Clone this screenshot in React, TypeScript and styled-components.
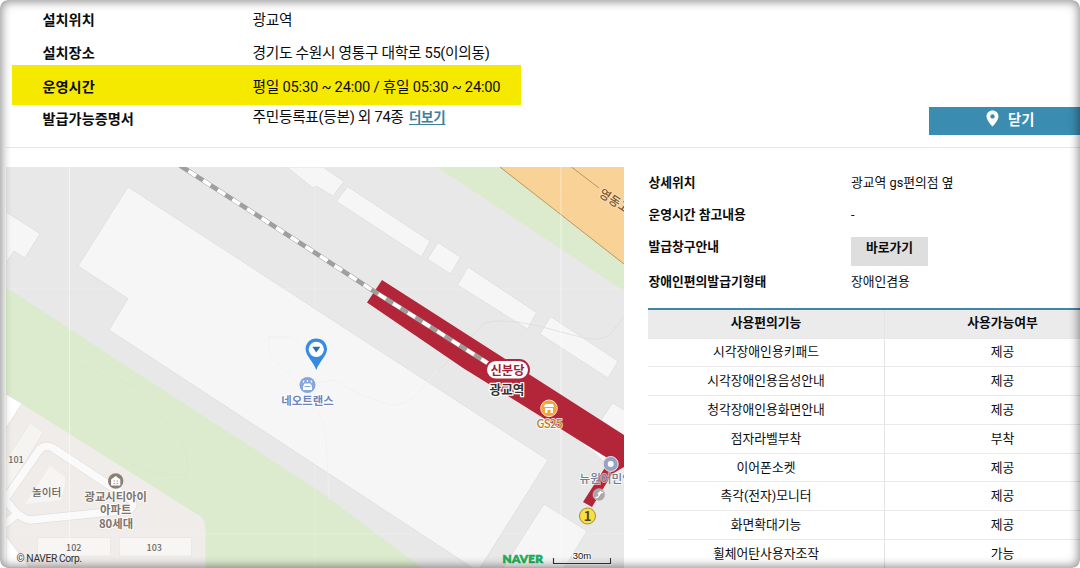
import React from 'react';
import styled, { createGlobalStyle, css } from 'styled-components';

const GlobalStyle = createGlobalStyle`
  *, *::before, *::after { box-sizing: border-box; }
  body {
    margin: 0;
    background: #fff;
    color: #0c0c0c;
    font-family: Roboto, "Noto Sans CJK KR", sans-serif;
  }
`;

const Page = styled.div`
  position: relative;
  width: 1080px;
  height: 568px;
  overflow: hidden;
  border-radius: 8px;
  background: #fff;
`;

const FrameShade = styled.div`
  position: absolute;
  inset: 0;
  border-radius: 8px;
  pointer-events: none;
  box-shadow: inset 0 0 10px 2px rgba(0, 0, 0, 0.42);
`;

const Summary = styled.section`
  display: flex;
  justify-content: space-between;
  height: 148px;
  margin-left: 6px;
  border-bottom: 1px solid #e6e6e6;
`;

const SummaryList = styled.dl`
  display: flex;
  flex-direction: column;
  width: 515px;
  margin: 0;
  padding: 3px 0 0 6px;
`;

const SummaryRow = styled.div<{ $height: number; $top?: number; $highlight?: boolean }>`
  display: grid;
  grid-template-columns: 210px 1fr;
  align-items: center;
  height: ${(p) => p.$height}px;
  padding: ${(p) => p.$top ?? 0}px 0 0 30.5px;
  background: ${(p) => (p.$highlight ? '#f6e900' : 'transparent')};
`;

const SummaryLabel = styled.dt`
  font-size: 14.2px;
  font-weight: 700;
  line-height: 22px;
  white-space: nowrap;
`;

const SummaryValue = styled.dd<{ $raise?: number; $tracking?: number }>`
  margin: 0;
  padding-bottom: ${(p) => p.$raise ?? 0}px;
  font-size: 14.7px;
  letter-spacing: ${(p) => p.$tracking ?? -0.3}px;
  line-height: 22px;
  white-space: nowrap;
`;

const MoreLink = styled.a`
  margin-left: 2px;
  color: #3f7f9c;
  font-size: 13.5px;
  font-weight: 700;
  text-decoration: underline;
  text-underline-offset: 2px;
`;

const CloseButton = styled.button`
  display: flex;
  align-items: center;
  align-self: flex-end;
  gap: 9px;
  width: 151px;
  height: 28.5px;
  margin-bottom: 12px;
  padding: 0 0 5px 57px;
  border: 0;
  background: #3a8cb0;
  color: #fff;
  font: 700 14.3px Roboto, "Noto Sans CJK KR", sans-serif;
`;

const Body = styled.main`
  display: flex;
  padding: 19px 0 0 6px;
`;

const MapCanvas = styled.svg`
  display: block;
  flex: none;
  width: 618px;
  height: 401px;
  font-family: "Noto Sans CJK KR", sans-serif;
`;

const Details = styled.section`
  flex: none;
  width: 472px;
  margin-left: 24px;
`;

const DetailList = styled.dl`
  margin: 0;
`;

const DetailRow = styled.div<{ $height: number }>`
  display: grid;
  grid-template-columns: 202.5px 1fr;
  align-items: center;
  height: ${(p) => p.$height}px;
  padding-left: 0.5px;
  font-size: 12.8px;
  line-height: 20px;
`;

const DetailLabel = styled.dt<{ $raise?: number }>`
  padding-bottom: ${(p) => p.$raise ?? 0}px;
  font-weight: 700;
`;

const DetailValue = styled.dd`
  margin: 0;
`;

const GoButton = styled.button`
  display: block;
  width: 77px;
  height: 29px;
  margin-top: 6px;
  padding: 0 0 8px;
  border: 0;
  background: #dedede;
  color: #0c0c0c;
  font: 700 12.8px/20px Roboto, "Noto Sans CJK KR", sans-serif;
`;

const FeatureTable = styled.table`
  width: 100%;
  margin-top: 9px;
  border-top: 2px solid #3f86a3;
  border-spacing: 0;
  table-layout: fixed;
`;

const cell = css`
  padding: 0 0 2px;
  border-bottom: 1px solid #e9e9e9;
  font-size: 12.8px;
  line-height: 20px;
  text-align: center;

  & + & { border-left: 1px solid #e4e4e4; }
`;

const HeadCell = styled.th`
  ${cell}
  height: 28.5px;
  background: #ebebeb;
  font-weight: 700;
`;

const Cell = styled.td`
  ${cell}
  height: 28.8px;
  padding-bottom: 0;
`;

const features = [
  ['시각장애인용키패드', '제공'],
  ['시각장애인용음성안내', '제공'],
  ['청각장애인용화면안내', '제공'],
  ['점자라벨부착', '부착'],
  ['이어폰소켓', '제공'],
  ['촉각(전자)모니터', '제공'],
  ['화면확대기능', '제공'],
  ['휠체어탄사용자조작', '가능'],
];

const buildings = [
  '128,187 78,266 128,298.5 109,330 473,568 480,568 548,460 320,312',
  '6,212 40,233.5 25,258 14,251 6,263',
  '287,167 313,188 316,186 333,196 344,181.5 323,167',
  '347.5,186.5 430,241 421.5,257 336.5,201.5',
  '438,242.5 460.5,257 450.5,274 427.5,259',
  '468,267 536.5,312.5 527.5,329 457.5,285',
  '550.5,316.5 618,361 608,378 540,334',
  '612.5,403 626,411 626,440 601,420',
  '586,445 590,442 614,458 606,464',
  '544,504 587,531 564,568 503,568',
];

const PinIcon = () => (
  <svg width="13" height="17" viewBox="0 0 13 17">
    <path
      fill="#fff"
      fillRule="evenodd"
      d="M6.5 0.5C3 0.5 0.5 3.1 0.5 6.4C0.5 10.5 6.5 16.5 6.5 16.5S12.5 10.5 12.5 6.4C12.5 3.1 10 0.5 6.5 0.5ZM6.5 4.2A2.2 2.2 0 1 1 6.5 8.6A2.2 2.2 0 1 1 6.5 4.2Z"
    />
  </svg>
);

const StationMap = () => (
  <MapCanvas viewBox="6 167 618 401">
    <rect x="6" y="167" width="618" height="401" fill="#e8e8e8" />

    {/* parks and the motorway */}
    <path d="M6 287L117 360L320 491.5L422 568H6Z" fill="#dcebcd" />
    <path d="M437 167H624V291Z" fill="#dcebcd" />
    <path d="M500 167H624V264Z" fill="#f8d297" />
    <path d="M500 167L624 264M571.5 167L599 188" fill="none" stroke="#bd9560" strokeWidth="1" />
    <path d="M74 364L135 386L152 407L183 443Q190 461 186 475Q150 478 110 453" fill="none" stroke="#d7e6c9" strokeWidth="0.7" />

    {/* apartment block */}
    <path d="M6 394L200 516Q205 519 205.500 530V568H6Z" fill="#f0ecea" />
    <path d="M6 394L22 403.500L6 428Z" fill="#fff" stroke="#ddd9d6" strokeWidth="0.6" />
    <path d="M6 536L30 568H6Z" fill="#fff" stroke="#ddd9d6" strokeWidth="0.6" />
    <path d="M30 423L43.500 432L6 493V460Z" fill="#f6f4f1" stroke="#e7e2df" strokeWidth="0.6" />
    <path d="M50 466L65 477V484L61 500L25 504Z" fill="#f6f5f4" />
    <g fill="none" strokeLinejoin="round" strokeLinecap="round">
      <path d="M3 502L40 449Q46 444 53 448L130 499Q136 505 129 510L30 520Q20 519 8 503M15 516L3 525" stroke="#e3dfdd" strokeWidth="9" />
      <path d="M3 502L40 449Q46 444 53 448L130 499Q136 505 129 510L30 520Q20 519 8 503M15 516L3 525" stroke="#fafafa" strokeWidth="7.500" />
    </g>
    <rect x="37.500" y="537.500" width="73" height="18.500" fill="#f7f6f4" stroke="#e7e4e1" strokeWidth="0.7" />
    <rect x="119.500" y="537.500" width="72" height="18.500" fill="#f7f6f4" stroke="#e7e4e1" strokeWidth="0.7" />

    <g fill="#f6f6f6" stroke="#dedede" strokeWidth="0.8">
      {buildings.map((points) => (
        <polygon key={points} points={points} />
      ))}
    </g>
    <path d="M438 371Q470 339 484 323Q500 318 535 325L580 337Q605 343 612 332L624 316" fill="none" stroke="#dcdcdc" strokeWidth="0.8" />
    <path d="M268 337H292L308 352M268 337L270 356L300 385L335 380Q362 398 392 405Q404 405 412 399L438 370M318 412Q325 425 326 437L329 500" fill="none" stroke="#f0f0f0" strokeWidth="0.8" />

    {/* tile seams */}
    <g stroke="#fff">
      <path d="M69.500 167V568M561 167V568" strokeOpacity="0.5" />
      <path d="M315 167V568M6 289H624M6 534H624" strokeOpacity="0.2" />
    </g>

    {/* station platform and railway */}
    <path d="M382 280L624 435V467L612 474L592 507L583 502L606 466L609 459L463 368L367 302.500Z" fill="#b3263a" />
    <path d="M608 460L584 444.500" stroke="#fff" strokeWidth="1" />
    <path d="M180 165.500L310 249.500L372 290L489 364" fill="none" stroke="#a19e9b" strokeWidth="4.600" />
    <path d="M188.500 171L310 249.500L372 290L489 364" fill="none" stroke="#fff" strokeWidth="3.800" strokeDasharray="9 8.400" />

    <text x="598" y="195.500" transform="rotate(33 598 195.500)" fontSize="12.300" fontWeight="500" fill="#80562c" stroke="#fbe5c2" strokeWidth="1.500" paintOrder="stroke">영동고</text>

    {/* station name */}
    <rect x="486" y="360" width="43" height="19.500" rx="9.750" fill="#fff" stroke="#b3263a" strokeWidth="2" />
    <g textAnchor="middle" fontWeight="700" paintOrder="stroke" strokeLinejoin="round">
      <text x="507.500" y="374.500" fontSize="12.300" fill="#a32137">신분당</text>
      <text x="507" y="394" fontSize="12.600" fill="#333" stroke="#fff" strokeWidth="2.500">광교역</text>
    </g>

    {/* convenience store */}
    <circle cx="549" cy="408.300" r="8.300" fill="#f2a53b" stroke="#fbe3bd" strokeWidth="1" />
    <path d="M545 404H553L554 407H544ZM545 408H553V413H550.500V410H547.500V413H545Z" fill="#fff" />
    <text x="549.500" y="427.500" textAnchor="middle" fontSize="11.500" fontWeight="500" fill="#b6852c" stroke="#fff" strokeOpacity="0.8" strokeWidth="1.800" paintOrder="stroke" textLength="26">GS25</text>

    {/* business */}
    <circle cx="307.500" cy="385" r="8" fill="#88a6de" />
    <path d="M303 382.500L304.200 380.500M307.500 382V380M312 382.500L310.800 380.500" stroke="#fff" strokeWidth="1.200" />
    <path d="M304.500 383.500H310.500L312 386.500V390H303V386.500Z" fill="#fff" />
    <path d="M304.500 386.500H310.500" stroke="#88a6de" strokeWidth="1" />
    <text x="307.500" y="404.500" textAnchor="middle" fontSize="11.400" fontWeight="700" fill="#6f85bd" stroke="#fff" strokeWidth="2" paintOrder="stroke">네오트랜스</text>

    {/* kiosk location */}
    <path d="M316.300 338.500C310 338.500 305.600 343.200 305.600 349C305.600 356 313 361 316.300 370C319.600 361 327 356 327 349C327 343.200 322.600 338.500 316.300 338.500Z" fill="#378ce2" />
    <circle cx="316.300" cy="349.300" r="7.600" fill="#fff" />
    <path d="M312.300 346.800H320.300L316.300 352.500Z" fill="#2d6d9e" />

    {/* clinic, escalator and exit */}
    <circle cx="610.700" cy="464" r="7.500" fill="#97a3c3" stroke="#e4e7f0" strokeWidth="1" />
    <circle cx="610.700" cy="464" r="3" fill="#fff" />
    <text x="579.500" y="482.800" fontSize="11.600" fontWeight="500" fill="#747c92" stroke="#fff" strokeOpacity="0.6" strokeWidth="1.800" paintOrder="stroke">뉴원어민영</text>
    <circle cx="599" cy="494.700" r="6" fill="#a8a8a8" stroke="#d0d0d0" strokeWidth="0.6" />
    <path d="M595.500 497.500H597.500L601 492.500H603M598 493L599.500 495M601 491L599 493" fill="none" stroke="#fff" strokeWidth="1.300" />
    <circle cx="587.500" cy="516" r="8" fill="#f8df43" stroke="#a38d35" strokeWidth="1" />
    <text x="587.500" y="521" textAnchor="middle" fontSize="13" fontWeight="700" fill="#504824">1</text>

    {/* apartment labels */}
    <circle cx="115.700" cy="481" r="7.700" fill="#898078" />
    <path d="M115.700 476L120.300 479.500V485.500H111.100V479.500Z" fill="#fff" />
    <path d="M113.500 481H115M116.500 481H118M113.500 483.500H115M116.500 483.500H118" stroke="#898078" strokeWidth="0.8" />
    <g textAnchor="middle" fill="#7d756e" stroke="#fff" strokeWidth="2" strokeOpacity="0.75" paintOrder="stroke" fontSize="11.300" fontWeight="700">
      <text x="115.700" y="500.500">광교시티아이</text>
      <text x="115.700" y="514.300">아파트</text>
      <text x="116" y="528">80세대</text>
    </g>
    <g textAnchor="middle" fill="#6c6967" fontWeight="500">
      <text x="46.700" y="496.300" fontSize="10.600">놀이터</text>
      <text x="16" y="462.700" fontSize="9">101</text>
      <text x="73.700" y="551" fontSize="9">102</text>
      <text x="154.300" y="551" fontSize="9">103</text>
    </g>

    {/* attribution and scale */}
    <text x="16.500" y="562" fontFamily="Roboto" fontSize="10.300" fill="#333" textLength="65.500">© NAVER Corp.</text>
    <text x="502.500" y="563.300" fontFamily="Lato" fontWeight="900" fontSize="11.800" fill="#1fae5b" stroke="#1fae5b" strokeWidth="0.700" textLength="40.500">NAVER</text>
    <path d="M553.500 558V563.500H610.500V558" fill="none" stroke="#fff" strokeWidth="3" strokeOpacity="0.6" />
    <path d="M553.500 558V563.500H610.500V558" fill="none" stroke="#333" strokeWidth="1.200" />
    <text x="582" y="559" textAnchor="middle" fontFamily="Liberation Sans" fontSize="9.500" fill="#111" stroke="#fff" strokeWidth="1.500" paintOrder="stroke">30m</text>
  </MapCanvas>
);

export default function App() {
  return (
    <Page>
      <GlobalStyle />
      <Summary>
        <SummaryList>
          <SummaryRow $height={33}>
            <SummaryLabel>설치위치</SummaryLabel>
            <SummaryValue>광교역</SummaryValue>
          </SummaryRow>
          <SummaryRow $height={29} $top={4}>
            <SummaryLabel>설치장소</SummaryLabel>
            <SummaryValue>경기도 수원시 영통구 대학로 55(이의동)</SummaryValue>
          </SummaryRow>
          <SummaryRow $height={40} $top={3} $highlight>
            <SummaryLabel>운영시간</SummaryLabel>
            <SummaryValue $tracking={-0.22}>평일 05:30 ~ 24:00 / 휴일 05:30 ~ 24:00</SummaryValue>
          </SummaryRow>
          <SummaryRow $height={28}>
            <SummaryLabel>발급가능증명서</SummaryLabel>
            <SummaryValue $raise={4}>
              주민등록표(등본) 외 74종 <MoreLink>더보기</MoreLink>
            </SummaryValue>
          </SummaryRow>
        </SummaryList>
        <CloseButton>
          <PinIcon />
          닫기
        </CloseButton>
      </Summary>

      <Body>
        <StationMap />
        <Details>
          <DetailList>
            <DetailRow $height={31}>
              <DetailLabel>상세위치</DetailLabel>
              <DetailValue>광교역 gs편의점 옆</DetailValue>
            </DetailRow>
            <DetailRow $height={33}>
              <DetailLabel>운영시간 참고내용</DetailLabel>
              <DetailValue>-</DetailValue>
            </DetailRow>
            <DetailRow $height={33}>
              <DetailLabel $raise={3}>발급창구안내</DetailLabel>
              <DetailValue>
                <GoButton>바로가기</GoButton>
              </DetailValue>
            </DetailRow>
            <DetailRow $height={35}>
              <DetailLabel>장애인편의발급기형태</DetailLabel>
              <DetailValue>장애인겸용</DetailValue>
            </DetailRow>
          </DetailList>
          <FeatureTable>
            <thead>
              <tr>
                <HeadCell>사용편의기능</HeadCell>
                <HeadCell>사용가능여부</HeadCell>
              </tr>
            </thead>
            <tbody>
              {features.map(([name, status]) => (
                <tr key={name}>
                  <Cell>{name}</Cell>
                  <Cell>{status}</Cell>
                </tr>
              ))}
            </tbody>
          </FeatureTable>
        </Details>
      </Body>
      <FrameShade />
    </Page>
  );
}
